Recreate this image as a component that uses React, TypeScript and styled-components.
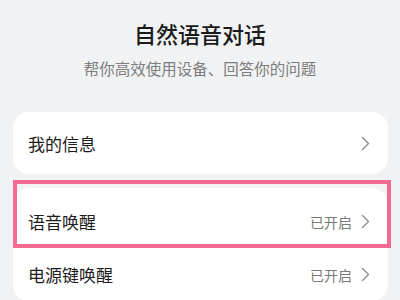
import React from 'react';
import styled, { createGlobalStyle } from 'styled-components';

const GlobalStyle = createGlobalStyle`
  html, body {
    margin: 0;
    padding: 0;
    background: #f1f2f4;
    font-family: "Noto Sans CJK SC", "Noto Sans", sans-serif;
  }
`;

const Page = styled.div`
  width: 400px;
  height: 300px;
  overflow: hidden;
  background: #f1f2f4;
`;

const Header = styled.header`
  display: flex;
  flex-direction: column;
  align-items: center;
  padding-top: 18px;
`;

const Title = styled.h1`
  margin: 0;
  font-size: 22px;
  line-height: 30px;
  font-weight: 500;
  color: #1a1a1a;
`;

const Subtitle = styled.p`
  margin: 9px 0 0;
  font-size: 15.5px;
  line-height: 22px;
  color: #7d7d7d;
`;

const Card = styled.section<{ $top: number; $padTop?: number }>`
  margin: ${(p) => p.$top}px 12px 0 13px;
  padding-top: ${(p) => p.$padTop ?? 0}px;
  background: #ffffff;
  border-radius: 16px;
`;

const Row = styled.div<{ $height: number }>`
  position: relative;
  display: flex;
  align-items: center;
  justify-content: space-between;
  height: ${(p) => p.$height}px;
  padding: 0 18px 0 15px;
`;

const Label = styled.span`
  font-size: 17px;
  color: #1c1c1c;
`;

const Trail = styled.div`
  display: flex;
  align-items: center;
  gap: 9px;
`;

const Status = styled.span`
  font-size: 14px;
  color: #7a7a7a;
`;

const Highlight = styled.div`
  position: absolute;
  left: 0;
  right: -3px;
  top: -15px;
  bottom: 0;
  border: 4px solid #f36b92;
  pointer-events: none;
`;

const Chevron = () => (
  <svg width="9" height="15" viewBox="0 0 9 15" fill="none">
    <path d="M1.5 1.5 L7.5 7.5 L1.5 13.5" stroke="#8c8c8c" strokeWidth="1.4" strokeLinecap="round" strokeLinejoin="round" />
  </svg>
);

const App: React.FC = () => (
  <Page>
    <GlobalStyle />
    <Header>
      <Title>自然语音对话</Title>
      <Subtitle>帮你高效使用设备、回答你的问题</Subtitle>
    </Header>
    <Card $top={33}>
      <Row $height={62}>
        <Label>我的信息</Label>
        <Chevron />
      </Row>
    </Card>
    <Card $top={14} $padTop={7}>
      <Row $height={53}>
        <Label>语音唤醒</Label>
        <Trail>
          <Status>已开启</Status>
          <Chevron />
        </Trail>
        <Highlight />
      </Row>
      <Row $height={53}>
        <Label>电源键唤醒</Label>
        <Trail>
          <Status>已开启</Status>
          <Chevron />
        </Trail>
      </Row>
    </Card>
  </Page>
);

export default App;
